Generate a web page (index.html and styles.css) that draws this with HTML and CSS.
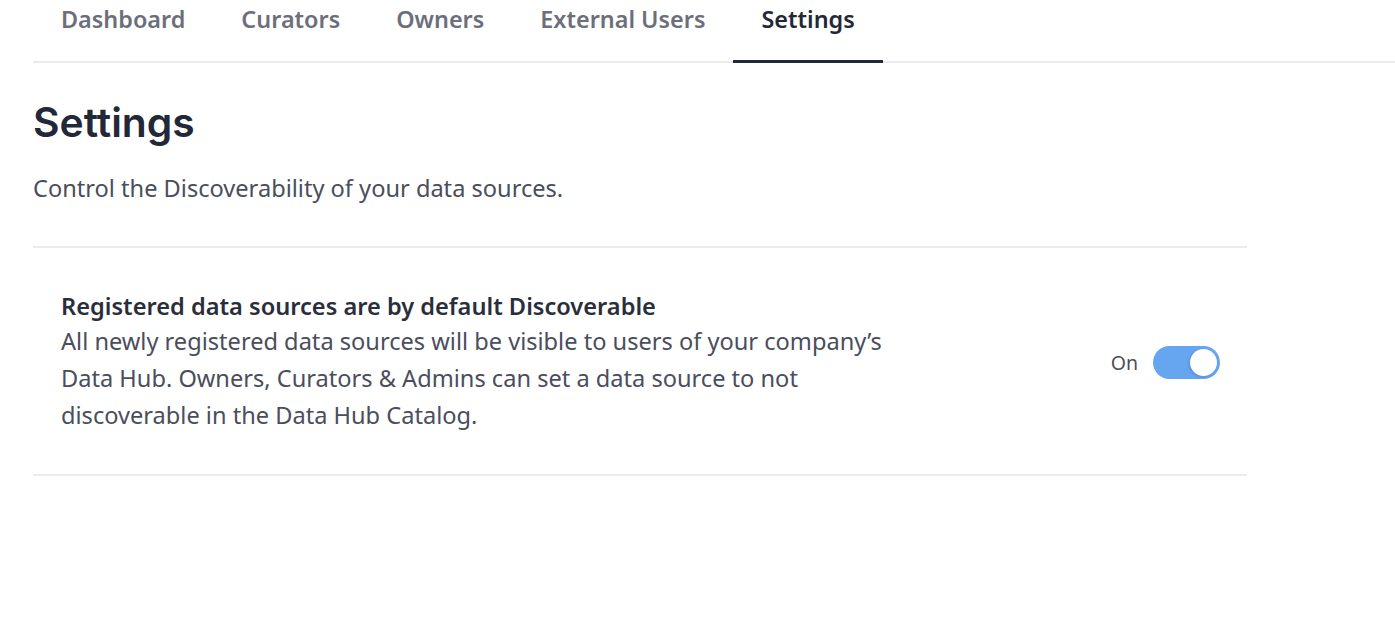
FILE: index.html
```html
<!DOCTYPE html>
<html lang="en">
<head>
<meta charset="utf-8">
<title>Settings</title>
<link rel="stylesheet" href="styles.css">
</head>
<body>
<div class="page">
  <nav class="tabs">
    <a class="tab">Dashboard</a>
    <a class="tab">Curators</a>
    <a class="tab">Owners</a>
    <a class="tab">External Users</a>
    <a class="tab active">Settings</a>
  </nav>
  <main class="content">
    <h1 class="title">Settings</h1>
    <p class="subtitle">Control the Discoverability of your data sources.</p>
    <section class="setting">
      <div class="setting-text">
        <h2 class="setting-title">Registered data sources are by default Discoverable</h2>
        <p class="setting-desc">All newly registered data sources will be visible to users of your company’s Data Hub. Owners, Curators &amp; Admins can set a data source to not discoverable in the Data Hub Catalog.</p>
      </div>
      <div class="toggle-wrap">
        <span class="toggle-label">On</span>
        <span class="toggle"><span class="knob"></span></span>
      </div>
    </section>
  </main>
</div>
</body>
</html>
```
FILE: styles.css
```css
* { box-sizing: border-box; }
html, body { margin: 0; padding: 0; background: #fff; }
body {
  font-family: "Noto Sans", "Open Sans", sans-serif;
  color: #2a2e3b;
}
.page { padding-left: 33px; }
.tabs {
  display: flex;
  border-bottom: 2px solid #ebebee;
  height: 63px;
}
.tab {
  display: block;
  padding: 0 28px;
  height: 63px;
  line-height: 38px;
  font-size: 23.4px;
  font-weight: 600;
  color: #6c6f7b;
  border-bottom: 3px solid transparent;
  margin-bottom: -2px;
}
.tab.active {
  color: #232838;
  border-bottom-color: #232838;
}
.content { width: 1214px; }
.title {
  margin: 35px 0 0;
  font-family: "Inter", "Noto Sans", sans-serif;
  font-size: 40.8px;
  line-height: 48px;
  font-weight: 600;
  color: #232838;
}
.subtitle {
  margin: 27px 0 0;
  font-size: 23.6px;
  line-height: 30px;
  color: #4a4e5c;
  padding-bottom: 43px;
  border-bottom: 2px solid #ebebee;
}
.setting {
  display: flex;
  align-items: center;
  justify-content: space-between;
  padding: 43px 27px 40px 28px;
  border-bottom: 2px solid #ebebee;
}
.setting-text { width: 840px; }
.setting-title {
  margin: 0;
  font-size: 23.6px;
  line-height: 30px;
  font-weight: 600;
  color: #2a2e3b;
}
.setting-desc {
  margin: 2px 0 0;
  font-size: 23.6px;
  line-height: 37px;
  color: #4a4e5c;
}
.toggle-wrap {
  display: flex;
  align-items: center;
  gap: 15px;
}
.toggle-label {
  font-size: 19.5px;
  color: #4a4e5c;
}
.toggle {
  display: flex;
  justify-content: flex-end;
  align-items: center;
  width: 67px;
  height: 33px;
  border-radius: 17px;
  background: #66a5f0;
  padding: 3px;
}
.knob {
  width: 27px;
  height: 27px;
  border-radius: 50%;
  background: #fff;
  box-shadow: -1px 1px 3px rgba(0,0,0,0.15);
}
```
